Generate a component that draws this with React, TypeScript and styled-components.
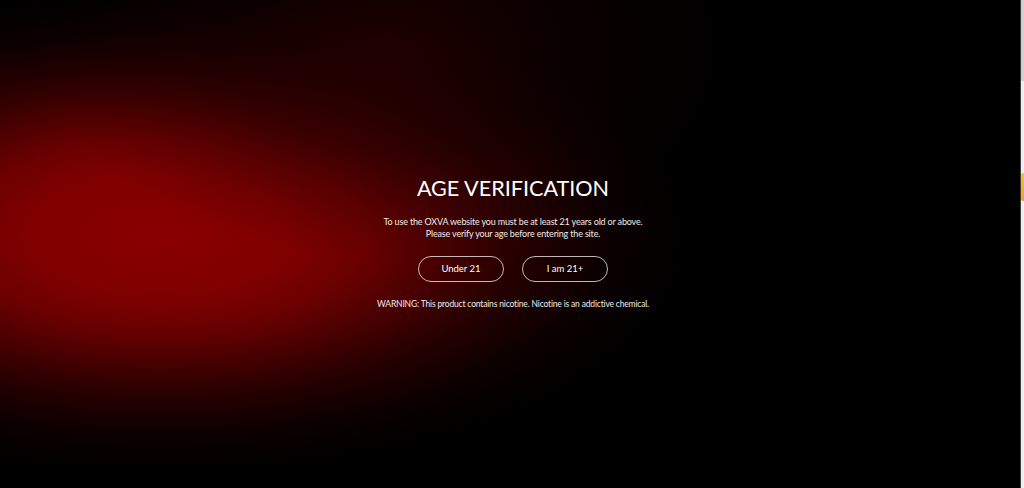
import styled, { createGlobalStyle } from 'styled-components';

const GlobalStyle = createGlobalStyle`
    html, body {
        margin: 0;
        padding: 0;
        background: #000;
        overflow: hidden;
    }
    body {
        font-family: Lato, "Open Sans", sans-serif;
    }
`;

const Page = styled.div`
    position: relative;
    display: flex;
    width: 1024px;
    height: 488px;
`;

const Stage = styled.main`
    flex: 1;
    display: flex;
    align-items: center;
    justify-content: center;
    background:
        radial-gradient(ellipse 340px 210px at 390px 50px, rgba(42, 0, 0, 0.7) 0%, rgba(28, 0, 0, 0.4) 50%, rgba(0, 0, 0, 0) 100%),
        radial-gradient(
            ellipse 530px 240px at 160px 234px,
            #8a0000 0%,
            #800000 25%,
            #6c0000 39%,
            #4a0000 53%,
            #260000 68%,
            #0b0000 85%,
            #000 100%
        ),
        #000;
`;

const Modal = styled.section`
    display: flex;
    flex-direction: column;
    align-items: center;
    text-align: center;
    color: #fff;
    margin-left: 6px;
    padding-bottom: 4px;
`;

const Title = styled.h1`
    margin: 0;
    font-size: 21.6px;
    line-height: 26px;
    font-weight: 400;
`;

const Notice = styled.p<{ $gap: number; $size: number }>`
    margin: ${({ $gap }) => $gap}px 0 0;
    font-size: ${({ $size }) => $size}px;
    line-height: 12px;
    letter-spacing: -0.17px;
    color: #ececec;
`;

const Actions = styled.div`
    display: flex;
    gap: 18px;
    margin-top: 16px;
`;

const AgeButton = styled.button`
    width: 86px;
    height: 26px;
    padding: 0;
    border: 1px solid rgba(255, 255, 255, 0.72);
    border-radius: 13px;
    background: transparent;
    color: #fff;
    font-family: inherit;
    font-size: 9.5px;
    cursor: pointer;
`;

const ScrollTrack = styled.div`
    display: flex;
    flex-direction: column;
    width: 3px;
    border-left: 1px solid #3c3c3c;
    background: #efeff1;
`;

const ScrollThumb = styled.div`
    height: 81px;
    background: #cfcfd4;
`;

const SideTab = styled.div`
    position: absolute;
    top: 173px;
    right: 0;
    width: 3px;
    height: 28px;
    background: linear-gradient(180deg, #f8c02a, #f2a516);
    border-radius: 2px 0 0 2px;
`;

function App() {
    return (
        <>
            <GlobalStyle />
            <Page>
                <Stage>
                    <Modal>
                        <Title>AGE VERIFICATION</Title>
                        <Notice $gap={15} $size={9}>
                            To use the OXVA website you must be at least 21 years old or above.
                            <br />
                            Please verify your age before entering the site.
                        </Notice>
                        <Actions>
                            <AgeButton type="button">Under 21</AgeButton>
                            <AgeButton type="button">I am 21+</AgeButton>
                        </Actions>
                        <Notice $gap={16} $size={8.5}>
                            WARNING: This product contains nicotine. Nicotine is an addictive chemical.
                        </Notice>
                    </Modal>
                </Stage>
                <ScrollTrack>
                    <ScrollThumb />
                </ScrollTrack>
                <SideTab />
            </Page>
        </>
    );
}

export default App;
